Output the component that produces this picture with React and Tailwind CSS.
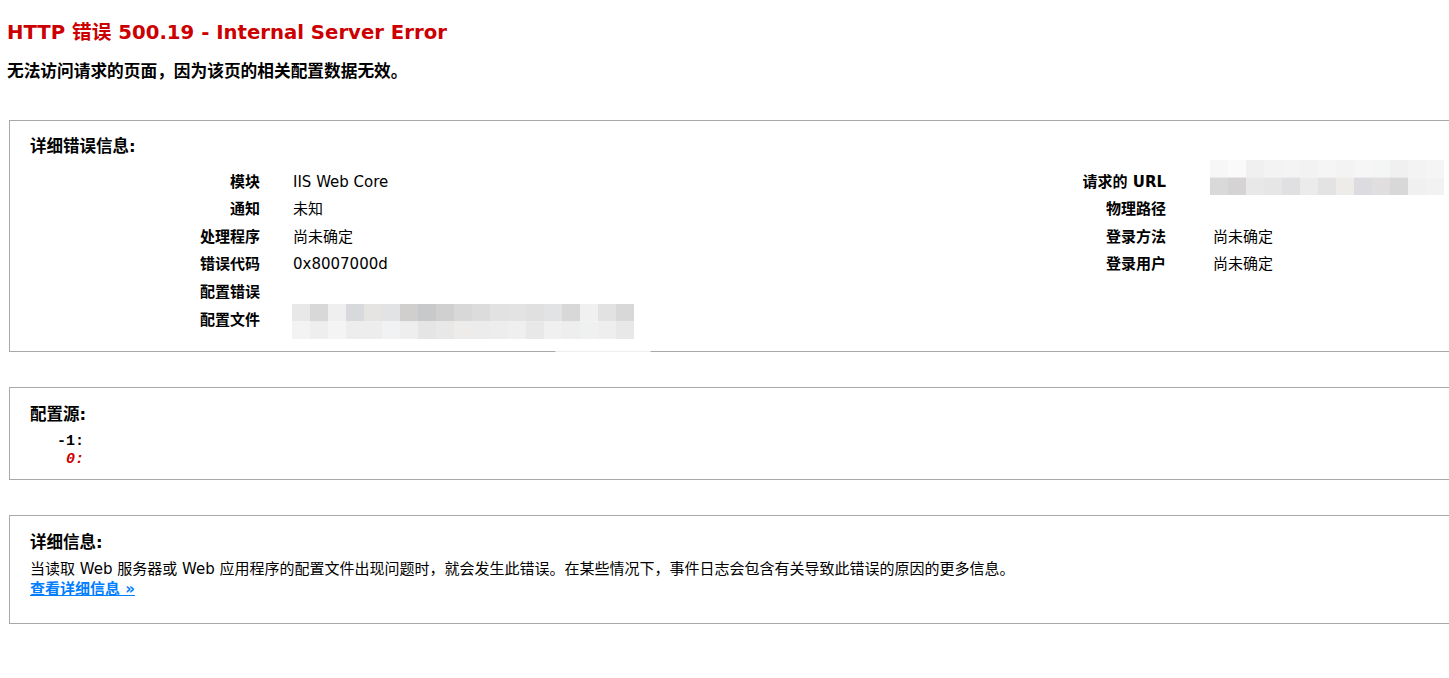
import React from "react";

const urlRow1 = ["#f7f7f7","#fafafa","#f0f0f0","#f3f3f3","#f4f4f4","#f2f2f2","#f5f5f5","#f3f3f3","#f6f6f6","#f4f5f5","#f0f0f0","#f3f3f3","#f5f5f5"];
const urlRow2 = ["#d9d9d9","#d5d3d4","#e8e8e8","#e6e6e6","#e0e0e2","#ebebeb","#e3e3e3","#eeece8","#dcdce0","#e0dede","#d8d8d8","#f0f0f0","#f2f2f2"];
const cfgRow1 = ["#e8e8e8","#d8d8d8","#efefef","#d8d9dc","#e5e4e2","#e2e3e5","#d0cfcd","#c8c9cb","#d0d0d0","#d8d8d8","#dcdcdc","#e2e2e2","#e3e3e3","#e0e0e0","#e2e3e5","#d8d8d8","#f0f0f0","#e2e2e2","#d8d8d8"];
const cfgRow2 = ["#f3f3f3","#eeeeef","#f4f4f4","#ededed","#ededed","#f1f2f4","#eeeeee","#e5e5e5","#e8e8e8","#edeceb","#ececec","#ededed","#efefef","#e8e8e8","#f0f0f0","#eeeeee","#eff0f0","#eeeeee","#e8e8e8"];

function Pixels({ rows, w, h }) {
  const cols = rows[0].length;
  return (
    <svg width={cols * w} height={rows.length * h} className="block">
      {rows.map((r, ri) =>
        r.map((c, ci) => (
          <rect key={ri + "-" + ci} x={ci * w} y={ri * h} width={w} height={h} fill={c} />
        ))
      )}
    </svg>
  );
}

function Row({ label, children, labelW, gap }) {
  return (
    <div className="flex h-[27.6px] items-center">
      <div className={"text-right font-bold shrink-0 " + labelW}>{label}</div>
      <div className={"relative " + gap}>{children}</div>
    </div>
  );
}

export default function App() {
  return (
    <div
      className="w-[1449px] overflow-hidden bg-white text-black pl-[7px] pb-10"
      style={{ fontFamily: '"DejaVu Sans", Verdana, "Noto Sans CJK SC", sans-serif' }}
    >
      <h2 className="pt-[21px] text-[19.7px] leading-[24px] font-bold text-[#cc0000]">
        HTTP 错误 500.19 - Internal Server Error
      </h2>
      <h3 className="mt-[16px] text-[16.7px] leading-[20px] font-bold">
        无法访问请求的页面，因为该页的相关配置数据无效。
      </h3>

      {/* box 1 */}
      <div className="mt-[39px] ml-[2px] w-[1500px] border border-[#a9a9a9] pl-[20px] pt-[16px] pb-[17px] text-[15px]">
        <div className="text-[16.5px] leading-[20px] font-bold">详细错误信息:</div>
        <div className="mt-[11px] flex">
          <div className="w-[650px] shrink-0">
            <Row label="模块" labelW="w-[230px]" gap="ml-[33px]">IIS Web Core</Row>
            <Row label="通知" labelW="w-[230px]" gap="ml-[33px]">未知</Row>
            <Row label="处理程序" labelW="w-[230px]" gap="ml-[33px]">尚未确定</Row>
            <Row label="错误代码" labelW="w-[230px]" gap="ml-[33px]">0x8007000d</Row>
            <Row label="配置错误" labelW="w-[230px]" gap="ml-[33px]"> </Row>
            <Row label="配置文件" labelW="w-[230px]" gap="ml-[33px]">
              <div className="absolute left-[-14px] top-[-20px] h-[48px] w-[370px] rounded-[24px] bg-white" />
              <div className="absolute left-[-1px] top-[-16px]">
                <Pixels rows={[cfgRow1, cfgRow2]} w={18} h={17.5} />
              </div>
              <div className="absolute left-[262px] top-[26px] h-[14px] w-[96px] rounded-full bg-white/80" />
            </Row>
          </div>
          <div className="flex-1">
            <Row label="请求的 URL" labelW="w-[486px]" gap="ml-[47px]">
              <div className="absolute left-[-3px] top-[-22px]">
                <Pixels rows={[urlRow1, urlRow2]} w={18} h={17.5} />
              </div>
            </Row>
            <Row label="物理路径" labelW="w-[486px]" gap="ml-[47px]"> </Row>
            <Row label="登录方法" labelW="w-[486px]" gap="ml-[47px]">尚未确定</Row>
            <Row label="登录用户" labelW="w-[486px]" gap="ml-[47px]">尚未确定</Row>
          </div>
        </div>
      </div>

      {/* box 2 */}
      <div className="mt-[35px] ml-[2px] w-[1500px] border border-[#a9a9a9] pl-[20px] pt-[17px] pb-[10px]">
        <div className="text-[16.5px] leading-[20px] font-bold">配置源:</div>
        <pre
          className="mt-[8px] text-[15px] leading-[18px] font-bold"
          style={{ fontFamily: '"Liberation Mono", "Courier New", monospace' }}
        >
{"   -1: \n"}<span className="italic text-[#cc0000]">{"    0: "}</span>
        </pre>
      </div>

      {/* box 3 */}
      <div className="mt-[35px] ml-[2px] w-[1500px] border border-[#a9a9a9] pl-[20px] pt-[17px] pb-[24px] text-[15px]">
        <div className="text-[16.5px] leading-[20px] font-bold">详细信息:</div>
        <p className="mt-[6px] leading-[20px]">
          当读取 Web 服务器或 Web 应用程序的配置文件出现问题时，就会发生此错误。在某些情况下，事件日志会包含有关导致此错误的原因的更多信息。
        </p>
        <a href="#" className="block w-fit leading-[20px] font-bold text-[#007eff] underline">
          查看详细信息 »
        </a>
      </div>
    </div>
  );
}
